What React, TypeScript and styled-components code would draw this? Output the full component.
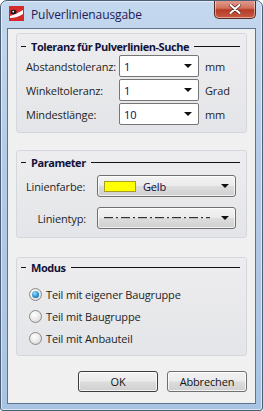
import React from 'react'
import styled, { createGlobalStyle } from 'styled-components'

const Global = createGlobalStyle`
  html, body { margin: 0; padding: 0; background: #ffffff; }
  body { font-family: "Open Sans", "Noto Sans", sans-serif; font-size: 11px; letter-spacing: -0.15px; color: #1e1e1e; }
  * { box-sizing: border-box; }
`

const Window = styled.div`
  width: 263px;
  height: 411px;
  display: flex;
  flex-direction: column;
  border: 1px solid #4d5f77;
  border-radius: 7px 7px 3px 3px;
  background: linear-gradient(180deg, #c4d8ee 0%, #b2cbe6 40%, #a9c4e2 100%);
  box-shadow: inset 0 0 0 1px rgba(255,255,255,0.55);
  overflow: hidden;
`

const TitleBar = styled.div`
  height: 27px;
  display: flex;
  align-items: flex-start;
  padding: 5px 0 0 8px;
  position: relative;
`

const AppIcon = styled.div`
  width: 15px;
  height: 15px;
  margin-right: 7px;
  flex: none;
`

const Caption = styled.div`
  font-size: 12px;
  letter-spacing: -0.1px;
  line-height: 17px;
  color: #241a58;
`

const CloseButton = styled.div`
  position: absolute;
  top: -1px;
  right: 6px;
  width: 42px;
  height: 19px;
  border: 1px solid #5a2a24;
  border-top: none;
  border-radius: 0 0 5px 5px;
  background: linear-gradient(180deg, #e4a093 0%, #d0715f 45%, #b83a24 55%, #c85a42 100%);
  box-shadow: inset 0 0 0 1px rgba(255,255,255,0.45);
  display: flex;
  align-items: center;
  justify-content: center;
`

const Client = styled.div`
  flex: 1;
  margin: 0 6px 6px 6px;
  border: 1px solid #5f7391;
  background: #f0f0f0;
  display: flex;
  flex-direction: column;
  padding: 4px 8px 0 8px;
`

const Group = styled.div<{ $top: number; $padTop: number; $pad: number }>`
  margin-top: ${p => p.$top}px;
  border: 1px solid #d4d8de;
  border-radius: 3px;
  background: linear-gradient(180deg, #ededef 0%, #e4e5e8 100%);
  padding: ${p => p.$padTop}px 6px ${p => p.$pad}px 4px;
  display: flex;
  flex-direction: column;
`

const GroupTitle = styled.div`
  display: flex;
  align-items: center;
  height: 14px;
  font-weight: 700;
  font-size: 11px;
  letter-spacing: -0.45px;
  color: #12123a;

  &::before {
    content: '';
    width: 5px;
    height: 1px;
    background: #111;
    margin-right: 5px;
    flex: none;
  }
  &::after {
    content: '';
    flex: 1;
    height: 1px;
    background: #111;
    margin-left: 5px;
  }
`

const Rows = styled.div<{ $top: number; $gap: number }>`
  margin-top: ${p => p.$top}px;
  display: flex;
  flex-direction: column;
  gap: ${p => p.$gap}px;
`

const Row = styled.div`
  display: flex;
  align-items: center;
  height: 22px;
`

const Label = styled.div<{ $w: number; $right?: boolean }>`
  width: ${p => p.$w}px;
  padding-left: 5px;
  padding-right: 1px;
  text-align: ${p => (p.$right ? 'right' : 'left')};
  flex: none;
  white-space: nowrap;
`

const Combo = styled.div`
  width: 80px;
  height: 22px;
  border: 1px solid #767676;
  border-radius: 2px;
  background: #ffffff;
  display: flex;
  align-items: center;
  padding: 0 6px 0 4px;
  color: #0a0a5a;
  flex: none;
`

const ComboText = styled.div`
  flex: 1;
`

const Arrow = styled.div`
  width: 0;
  height: 0;
  border-left: 4px solid transparent;
  border-right: 4px solid transparent;
  border-top: 4px solid #111;
`

const Unit = styled.div`
  margin-left: 6px;
`

const Picker = styled.div`
  width: 139px;
  height: 22px;
  margin-left: 10px;
  border: 1px solid #707070;
  border-radius: 3px;
  background: linear-gradient(180deg, #f4f4f4 0%, #ebebeb 48%, #dddddd 52%, #cfcfcf 100%);
  box-shadow: inset 0 0 0 1px rgba(255,255,255,0.7);
  display: flex;
  align-items: center;
  padding: 0 6px 0 6px;
  flex: none;
`

const Swatch = styled.div<{ $color: string }>`
  width: 32px;
  height: 11px;
  background: ${p => p.$color};
  border: 1px solid #a89c28;
  margin-right: 7px;
`

const PickerText = styled.div`
  flex: 1;
  color: #0a0a3a;
  display: flex;
  align-items: center;
`

const Radios = styled.div`
  margin-top: 9px;
  display: flex;
  flex-direction: column;
`

const RadioRow = styled.div`
  display: flex;
  align-items: center;
  height: 22px;
  padding-left: 8px;
`

const RadioDot = styled.div<{ $on?: boolean }>`
  width: 13px;
  height: 13px;
  border-radius: 50%;
  border: 1px solid #8a8a8a;
  background: radial-gradient(circle at 40% 35%, #ffffff 0%, #e8e8e8 55%, #c9c9c9 100%);
  display: flex;
  align-items: center;
  justify-content: center;
  margin-right: 4px;
  flex: none;

  &::after {
    content: '';
    display: ${p => (p.$on ? 'block' : 'none')};
    width: 7px;
    height: 7px;
    border-radius: 50%;
    background: radial-gradient(circle at 40% 35%, #9fe0fb 0%, #2a8fd0 55%, #0d4f86 100%);
  }
`

const Buttons = styled.div`
  margin-top: 15px;
  display: flex;
  justify-content: flex-end;
  gap: 9px;
`

const Button = styled.div<{ $default?: boolean }>`
  width: 80px;
  height: 21px;
  border: 1px solid ${p => (p.$default ? '#3c3c3c' : '#707070')};
  border-radius: 3px;
  background: linear-gradient(180deg, #f2f2f2 0%, #ebebeb 48%, #dddddd 52%, #cfcfcf 100%);
  box-shadow: inset 0 0 0 1px rgba(255,255,255,0.75);
  display: flex;
  align-items: center;
  justify-content: center;
  color: #141414;
`

const LineStyle = () => (
  <svg width="108" height="4" viewBox="0 0 108 4">
    {[0, 1, 2, 3, 4, 5].map(i => (
      <g key={i} fill="#333">
        <rect x={i * 17} y="1" width="9" height="1.2" />
        <rect x={i * 17 + 12} y="1" width="2" height="1.2" />
      </g>
    ))}
    <rect x="102" y="1" width="4" height="1.2" fill="#333" />
  </svg>
)

const LogoIcon = () => (
  <svg width="15" height="15" viewBox="0 0 15 15">
    <rect width="15" height="15" fill="#d42a2a" />
    <path d="M1 10 C5 9 9 7 14 4 L14 8 C9 11 5 12 1 12 Z" fill="#ffffff" />
    <ellipse cx="4.5" cy="6" rx="3" ry="2.2" fill="#1a1a1a" />
    <circle cx="4.2" cy="5.6" r="0.9" fill="#ffffff" />
  </svg>
)

export default function App() {
  return (
    <>
      <Global />
      <Window>
        <TitleBar>
          <AppIcon><LogoIcon /></AppIcon>
          <Caption>Pulverlinienausgabe</Caption>
          <CloseButton>
            <svg width="12" height="10" viewBox="0 0 12 10">
              <path d="M1.5 1 L10.5 9 M10.5 1 L1.5 9" stroke="#5a2a24" strokeWidth="3.4" strokeLinecap="round" />
              <path d="M1.5 1 L10.5 9 M10.5 1 L1.5 9" stroke="#ffffff" strokeWidth="2" strokeLinecap="round" />
            </svg>
          </CloseButton>
        </TitleBar>
        <Client>
          <Group $top={0} $padTop={5} $pad={7}>
            <GroupTitle>Toleranz für Pulverlinien-Suche</GroupTitle>
            <Rows $top={2} $gap={2}>
              <Row>
                <Label $w={98}>Abstandstoleranz:</Label>
                <Combo><ComboText>1</ComboText><Arrow /></Combo>
                <Unit>mm</Unit>
              </Row>
              <Row>
                <Label $w={98}>Winkeltoleranz:</Label>
                <Combo><ComboText>1</ComboText><Arrow /></Combo>
                <Unit>Grad</Unit>
              </Row>
              <Row>
                <Label $w={98}>Mindestlänge:</Label>
                <Combo><ComboText>10</ComboText><Arrow /></Combo>
                <Unit>mm</Unit>
              </Row>
            </Rows>
          </Group>

          <Group $top={17} $padTop={4} $pad={8}>
            <GroupTitle>Parameter</GroupTitle>
            <Rows $top={6} $gap={10}>
              <Row>
                <Label $w={66}>Linienfarbe:</Label>
                <Picker>
                  <Swatch $color="#ffff00" />
                  <PickerText>Gelb</PickerText>
                  <Arrow />
                </Picker>
              </Row>
              <Row>
                <Label $w={66} $right>Linientyp:</Label>
                <Picker>
                  <PickerText><LineStyle /></PickerText>
                  <Arrow />
                </Picker>
              </Row>
            </Rows>
          </Group>

          <Group $top={19} $padTop={2} $pad={6}>
            <GroupTitle>Modus</GroupTitle>
            <Radios>
              <RadioRow><RadioDot $on />Teil mit eigener Baugruppe</RadioRow>
              <RadioRow><RadioDot />Teil mit Baugruppe</RadioRow>
              <RadioRow><RadioDot />Teil mit Anbauteil</RadioRow>
            </Radios>
          </Group>

          <Buttons>
            <Button $default>OK</Button>
            <Button>Abbrechen</Button>
          </Buttons>
        </Client>
      </Window>
    </>
  )
}
